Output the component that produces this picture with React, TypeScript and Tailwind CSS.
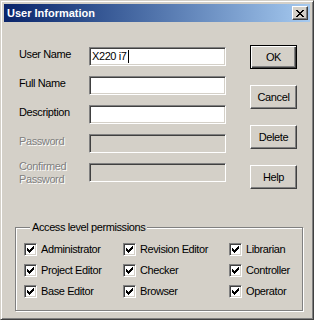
const font = "font-['Liberation_Sans',Arial,sans-serif]";

function Field({ label, value, disabled, twoLine }: { label: string; value?: string; disabled?: boolean; twoLine?: boolean }) {
  return (
    <div className={`flex ${twoLine ? 'items-center' : 'items-start'} h-[19px]`}>
      <div
        className={`w-[70px] leading-[13px] ${twoLine ? '' : 'pt-[1px]'} ${
          disabled ? 'text-[#808080] [text-shadow:1px_1px_0_#fff]' : 'text-black'
        }`}
      >
        {twoLine ? (
          <>
            Confirmed
            <br />
            Password
          </>
        ) : (
          label
        )}
      </div>
      <div
        className={`w-[137px] h-[19px] border border-t-[#808080] border-l-[#808080] border-b-white border-r-white shadow-[inset_1px_1px_0_#404040,inset_-1px_-1px_0_#d4d0c8] flex items-center pl-[2px] ${
          disabled ? 'bg-[#d4d0c8]' : 'bg-white'
        }`}
      >
        {value && (
          <>
            <span className="leading-[13px]">{value}</span>
            <span className="w-px h-[13px] bg-black ml-[1px]" />
          </>
        )}
      </div>
    </div>
  );
}

function Button({ label, isDefault }: { label: string; isDefault?: boolean }) {
  return (
    <button
      className={`w-[47px] h-[24px] flex items-center justify-center bg-[#d4d0c8] text-black leading-[13px] ${
        isDefault
          ? 'border border-black shadow-[inset_1px_1px_0_#fff,inset_-1px_-1px_0_#404040,inset_-2px_-2px_0_#808080]'
          : 'border border-t-white border-l-white border-b-[#404040] border-r-[#404040] shadow-[inset_-1px_-1px_0_#808080]'
      }`}
    >
      {label}
    </button>
  );
}

function Check({ label }: { label: string }) {
  return (
    <div className="flex items-center h-[13px] gap-[4px]">
      <div className="w-[13px] h-[13px] bg-white border border-t-[#808080] border-l-[#808080] border-b-white border-r-white shadow-[inset_1px_1px_0_#404040,inset_-1px_-1px_0_#d4d0c8] flex items-center justify-center">
        <svg width="7" height="7" viewBox="0 0 7 7" shapeRendering="crispEdges">
          <path d="M0 2h1v1h1v1h1v-1h1v-1h1v-1h1v-1h1v3h-1v1h-1v1h-1v1h-1v1h-1v-1h-1v-1h-1z" fill="#000" />
        </svg>
      </div>
      <span className="leading-[13px]">{label}</span>
    </div>
  );
}

export default function App() {
  return (
    <div
      className={`${font} text-[11px] tracking-[-0.4px] w-[314px] h-[320px] bg-[#d4d0c8] border border-t-[#d4d0c8] border-l-[#d4d0c8] border-b-[#404040] border-r-[#404040] shadow-[inset_1px_1px_0_#fff,inset_-1px_-1px_0_#808080] p-[3px] flex flex-col`}
    >
      <div className="h-[18px] bg-gradient-to-r from-[#0a246a] to-[#a6caf0] flex items-center justify-between pl-[3px] pr-[2px]">
        <span className="text-white font-bold text-[11px] tracking-normal leading-[13px]">User Information</span>
        <div className="w-[16px] h-[14px] bg-[#d4d0c8] border border-t-white border-l-white border-b-[#404040] border-r-[#404040] shadow-[inset_-1px_-1px_0_#808080] flex items-center justify-center">
          <svg width="8" height="7" viewBox="0 0 8 7" shapeRendering="crispEdges">
            <path d="M0 0h2v1h1v1h2v-1h1v-1h2v1h-1v1h-1v1h-1v1h1v1h1v1h1v1h-2v-1h-1v-1h-2v1h-1v1h-2v-1h1v-1h1v-1h1v-1h-1v-1h-1v-1h-1z" fill="#000" />
          </svg>
        </div>
      </div>

      <div className="flex pt-[23px] pl-[15px]">
        <div className="flex flex-col gap-[10px] mt-[2px]">
          <Field label="User Name" value="X220 i7" />
          <Field label="Full Name" />
          <Field label="Description" />
          <Field label="Password" disabled />
          <Field label="Confirmed Password" disabled twoLine />
        </div>
        <div className="flex flex-col gap-[16px] ml-[24px]">
          <Button label="OK" isDefault />
          <Button label="Cancel" />
          <Button label="Delete" />
          <Button label="Help" />
        </div>
      </div>

      <fieldset className="ml-[11px] mt-[32px] w-[288px] h-[90px] border border-[#808080] shadow-[1px_1px_0_#fff,inset_1px_1px_0_#fff] pl-[8px] pt-[9px]">
        <legend className="ml-[6px] px-[2px] bg-[#d4d0c8] leading-[13px] relative">Access level permissions</legend>
        <div className="grid grid-cols-[99px_106px_1fr] gap-y-[8px]">
          <Check label="Administrator" />
          <Check label="Revision Editor" />
          <Check label="Librarian" />
          <Check label="Project Editor" />
          <Check label="Checker" />
          <Check label="Controller" />
          <Check label="Base Editor" />
          <Check label="Browser" />
          <Check label="Operator" />
        </div>
      </fieldset>
    </div>
  );
}
